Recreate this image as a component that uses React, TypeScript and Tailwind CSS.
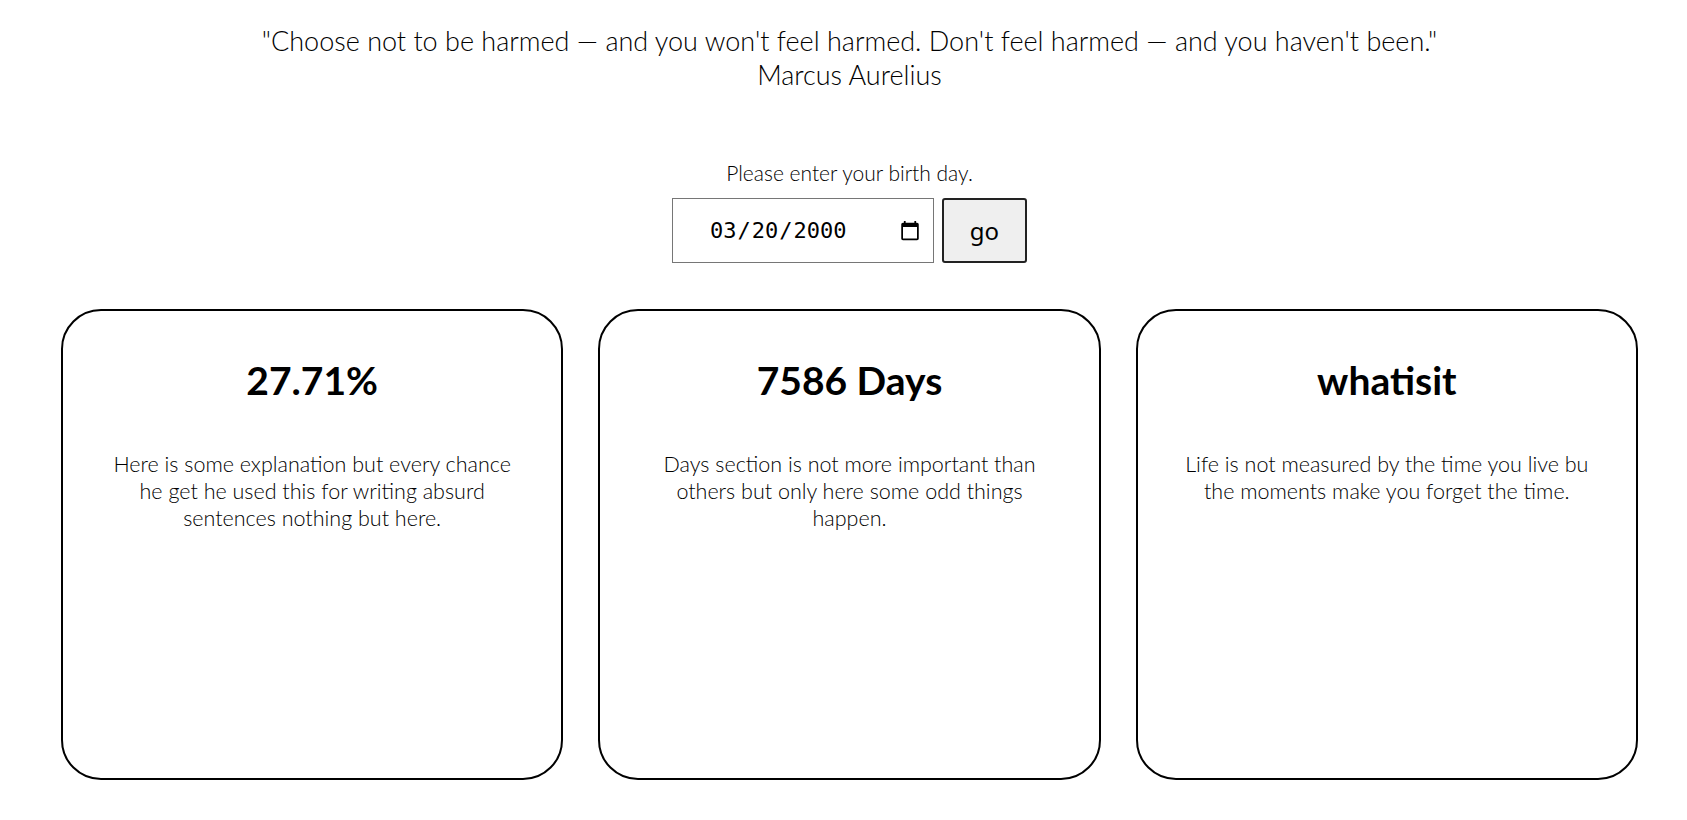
import { useState } from 'react';

const cards = [
  {
    title: '27.71%',
    text: 'Here is some explanation but every chance he get he used this for writing absurd sentences nothing but here.',
  },
  {
    title: '7586 Days',
    text: 'Days section is not more important than others but only here some odd things happen.',
  },
  {
    title: 'whatisit',
    text: 'Life is not measured by the time you live bu the moments make you forget the time.',
  },
];

export default function App() {
  const [birth, setBirth] = useState('2000-03-20');

  return (
    <div className="min-h-screen bg-white text-black font-['Lato','Noto_Sans',sans-serif]">
      {/* Quote */}
      <div className="flex flex-col items-center pt-[24px] pl-[12px] text-[27px] leading-[34px] font-light">
        <p>"Choose not to be harmed — and you won't feel harmed. Don't feel harmed — and you haven't been."</p>
        <p>Marcus Aurelius</p>
      </div>

      {/* Birthday form */}
      <div className="flex flex-col items-center pt-[69px] pl-[12px]">
        <label className="text-[21px] leading-[24px] font-light">Please enter your birth day.</label>
        <div className="flex items-center gap-[8px] mt-[13px]">
          <input
            type="date"
            value={birth}
            onChange={(e) => setBirth(e.target.value)}
            className="w-[262px] h-[65px] border border-[#767676] pl-[36px] pr-[10px] text-[22px] font-['DejaVu_Sans_Mono',monospace]"
          />
          <button className="w-[85px] h-[65px] border-2 border-[#222] rounded-[3px] bg-[#efefef] text-[24px] font-['Noto_Sans',sans-serif]">
            go
          </button>
        </div>
      </div>

      {/* Cards */}
      <div className="ml-[61px] w-[1577px] mt-[46px] grid grid-cols-3 gap-[35px]">
        {cards.map((c) => (
          <div
            key={c.title}
            className="h-[471px] border-2 border-black rounded-[40px] flex flex-col items-center px-[46px] pt-[42px]"
          >
            <h2 className="text-[39px] leading-[54px] font-bold">{c.title}</h2>
            <p className="mt-[44px] text-[21.5px] leading-[27px] font-light text-center">{c.text}</p>
          </div>
        ))}
      </div>
    </div>
  );
}
